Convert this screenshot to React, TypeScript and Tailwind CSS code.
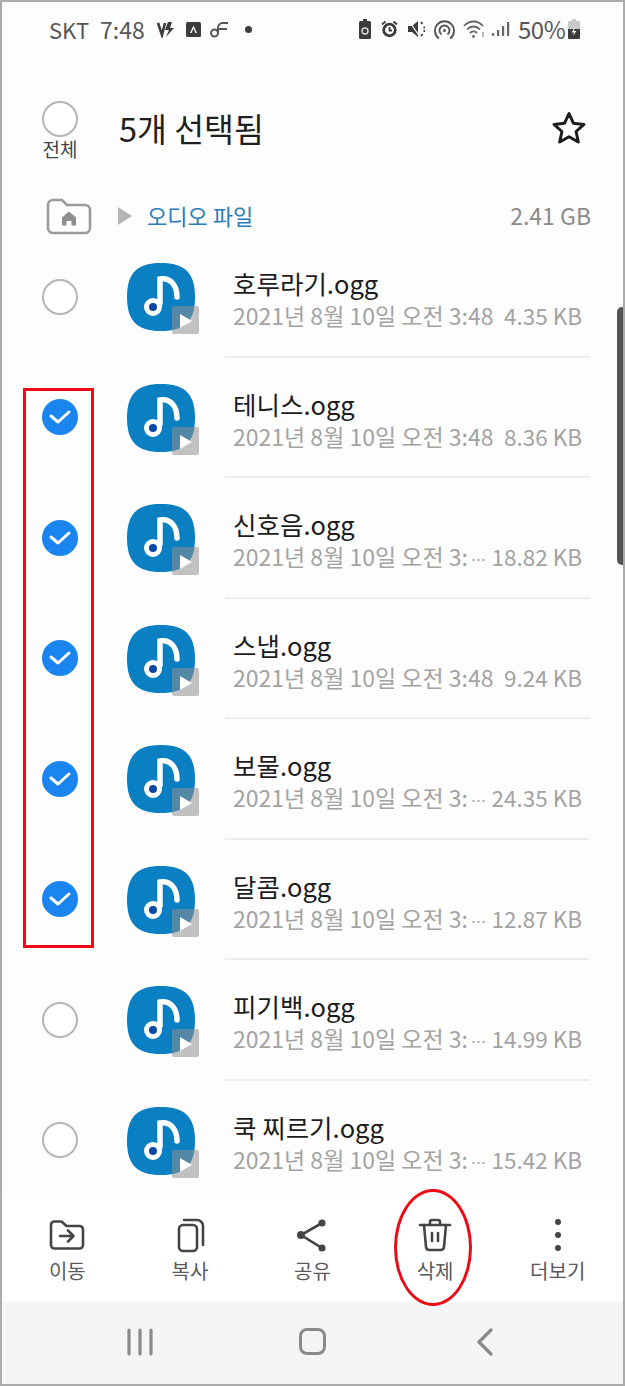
const files = [
  { name: '호루라기.ogg', date: '2021년 8월 10일 오전 3:48', size: '4.35 KB', checked: false, cut: false },
  { name: '테니스.ogg', date: '2021년 8월 10일 오전 3:48', size: '8.36 KB', checked: true, cut: false },
  { name: '신호음.ogg', date: '2021년 8월 10일 오전 3:', size: '18.82 KB', checked: true, cut: true },
  { name: '스냅.ogg', date: '2021년 8월 10일 오전 3:48', size: '9.24 KB', checked: true, cut: false },
  { name: '보물.ogg', date: '2021년 8월 10일 오전 3:', size: '24.35 KB', checked: true, cut: true },
  { name: '달콤.ogg', date: '2021년 8월 10일 오전 3:', size: '12.87 KB', checked: true, cut: true },
  { name: '피기백.ogg', date: '2021년 8월 10일 오전 3:', size: '14.99 KB', checked: false, cut: true },
  { name: '쿡 찌르기.ogg', date: '2021년 8월 10일 오전 3:', size: '15.42 KB', checked: false, cut: true },
];

function EmptyCircle() {
  return <div className="h-9 w-9 rounded-full border-2 border-[#b5b5b5] bg-white" />;
}

function CheckCircle() {
  return (
    <div className="flex h-9 w-9 items-center justify-center rounded-full bg-[#1a85ee]">
      <svg width="24" height="18" viewBox="0 0 24 18" fill="none">
        <path d="M3 8L10 14L21 4" stroke="#fff" strokeWidth="3" strokeLinecap="round" strokeLinejoin="round" />
      </svg>
    </div>
  );
}

function MusicIcon() {
  return (
    <svg width="74" height="74" viewBox="0 0 74 74" className="shrink-0">
      <path d="M34 0C58 0 68 10 68 34C68 58 58 68 34 68C10 68 0 58 0 34C0 10 10 0 34 0Z" fill="#0a7fc1" />
      <path d="M33 40V16C43 14 50 22 50 34" fill="none" stroke="#fff" strokeWidth="5.5" strokeLinecap="round" />
      <circle cx="26" cy="44" r="6.5" fill="#0b47a6" stroke="#fff" strokeWidth="5" />
      <rect x="45" y="43" width="27" height="28" rx="2" fill="#8f8f8f" fillOpacity="0.55" />
      <path d="M53 51L65 58L53 65Z" fill="#fff" />
    </svg>
  );
}

function FileRow({ file, last }: { file: (typeof files)[number]; last: boolean }) {
  return (
    <div className="flex h-[120.5px] shrink-0 items-start">
      <div className="flex h-[120px] w-[116px] shrink-0 items-center justify-center pb-[1px]">
        {file.checked ? <CheckCircle /> : <EmptyCircle />}
      </div>
      <div className="mt-[26px] w-[107px] shrink-0 pl-[9px]">
        <MusicIcon />
      </div>
      <div className={`h-[120.5px] w-[365px] px-[8px] pt-[28px] ${last ? '' : 'border-b-2 border-[#eeeeee]'}`}>
        <div className="text-[25.5px] leading-[36px] text-[#1c1c1c]">{file.name}</div>
        <div className="mt-[-1px] flex items-baseline justify-between text-[#a3a3a3]">
          <span className="text-[23px] leading-[30px]">
            {file.date}
            {file.cut && <span className="ml-[3px] text-[15px]">⋯</span>}
          </span>
          <span className="text-[22.5px] leading-[30px]">{file.size}</span>
        </div>
      </div>
    </div>
  );
}

function StatusBar() {
  return (
    <div className="flex h-[54px] shrink-0 items-center justify-between pl-[47px] pr-[43px] text-[#575757]">
      <div className="flex items-center">
        <span className="w-[51px] text-[22px]">SKT</span>
        <span className="w-[57px] text-[23px]">7:48</span>
        <svg width="18" height="18" viewBox="0 0 18 18" fill="none" className="mr-[11px]">
          <path d="M1 3l4 12 3-12" stroke="#3c3c3c" strokeWidth="2.6" />
          <path d="M11 2L8 10h4l-3 7 8-9h-4l2-6z" fill="#3c3c3c" />
        </svg>
        <svg width="15" height="15" viewBox="0 0 15 15" className="mr-[9px]">
          <rect width="15" height="15" rx="1.5" fill="#3c3c3c" />
          <path d="M7.5 3.5L11 11H9.5L7.5 6.5 5.5 11H4z" fill="#fff" />
        </svg>
        <svg width="19" height="17" viewBox="0 0 19 17" fill="none" stroke="#555" strokeWidth="2" className="mr-[16px]">
          <circle cx="4.5" cy="12" r="3.5" />
          <path d="M8 12V7c0-3 2-5 4.5-5H18M8 8h9" />
        </svg>
        <div className="h-[7px] w-[7px] rounded-full bg-[#3c3c3c]" />
      </div>
      <div className="flex items-center">
        <svg width="12" height="20" viewBox="0 0 12 20" className="mr-[10px]">
          <path d="M4 0h4v2h2.500A1.500 1.500 0 0 1 12 3.500V18.500A1.500 1.500 0 0 1 10.500 20H1.500A1.500 1.500 0 0 1 0 18.500V3.500A1.500 1.500 0 0 1 1.500 2H4z" fill="#3c3c3c" />
          <circle cx="6" cy="12" r="3" fill="none" stroke="#ddd" strokeWidth="1.4" />
        </svg>
        <svg width="17" height="18" viewBox="0 0 17 18" fill="none" className="mr-[10px]">
          <circle cx="8.5" cy="10" r="5.8" stroke="#3c3c3c" strokeWidth="2.8" />
          <path d="M1 4.5L4.500 1.500M16 4.500L12.500 1.500M8.500 7v3.500h2.500" stroke="#3c3c3c" strokeWidth="1.8" />
        </svg>
        <svg width="17" height="18" viewBox="0 0 17 18" fill="none" className="mr-[9px]">
          <path d="M0 6h4l6-5v16l-6-5H0z" fill="#3c3c3c" />
          <path d="M13 2l1.500 2M15.500 7.500H17M15.500 11H17M13 16l1.500-2" stroke="#3c3c3c" strokeWidth="1.8" />
          <path d="M1 1l11 16" stroke="#fff" strokeWidth="1.2" />
        </svg>
        <svg width="21" height="21" viewBox="0 0 21 21" fill="none" stroke="#555" strokeWidth="1.9" className="mr-[8px]">
          <path d="M5 19.500a9.500 9.500 0 1 1 11 0" />
          <path d="M7.500 15.500a5 5 0 1 1 6 0" />
          <circle cx="10.5" cy="11.5" r="1.5" fill="#555" stroke="none" />
        </svg>
        <svg width="23" height="20" viewBox="0 0 23 20" fill="none" stroke="#666" strokeWidth="1.8" className="mr-[6px]">
          <path d="M1 7c5.500-6 13.500-6 19 0M4 10.500c3.800-4 9.200-4 13 0M7 14c2-2 5-2 7 0" />
          <circle cx="10.5" cy="17.5" r="1.4" fill="#666" stroke="none" />
          <path d="M20 13v5" stroke="#999" strokeWidth="1.3" />
        </svg>
        <svg width="18" height="16" viewBox="0 0 18 16" className="mr-[8px]">
          <rect x="0" y="12" width="2.2" height="3" fill="#777" />
          <rect x="5" y="9" width="2.2" height="6" fill="#666" />
          <rect x="10" y="5" width="2.2" height="10" fill="#666" />
          <rect x="15" y="1" width="2.2" height="14" fill="#666" />
        </svg>
        <span className="w-[50px] text-[24px] tracking-[-0.5px]">50%</span>
        <svg width="12" height="20" viewBox="0 0 12 20">
          <path d="M4 0h4v2h2.500A1.500 1.500 0 0 1 12 3.500V18.500A1.500 1.500 0 0 1 10.500 20H1.500A1.500 1.500 0 0 1 0 18.500V3.500A1.500 1.500 0 0 1 1.500 2H4z" fill="#c8c8c8" />
          <path d="M0 10h12v8.500a1.500 1.500 0 0 1-1.500 1.500H1.500A1.500 1.500 0 0 1 0 18.500z" fill="#3c3c3c" />
          <path d="M7 8L3.500 13.500H6L5 17l3.500-5H6z" fill="#eee" />
        </svg>
      </div>
    </div>
  );
}

function Header() {
  return (
    <div className="flex h-[118px] shrink-0 items-start justify-between pr-[36px]">
      <div className="flex items-start">
        <div className="flex w-[117px] flex-col items-center pr-[1px] pt-[45px]">
          <EmptyCircle />
          <span className="mt-[-1px] text-[19px] leading-[26px] text-[#444]">전체</span>
        </div>
        <div className="pt-[48px] text-[32.5px] leading-[48px] text-[#1f1f1f]">5개 선택됨</div>
      </div>
      <svg width="36" height="36" viewBox="0 0 36 36" fill="none" className="mt-[54px]">
        <path d="M18 3.500L22.400 13.200L33 14.400L25.100 21.500L27.300 32L18 26.700L8.700 32L10.900 21.500L3 14.400L13.600 13.200Z" stroke="#1c1c1c" strokeWidth="3" strokeLinejoin="round" />
      </svg>
    </div>
  );
}

function Breadcrumb() {
  return (
    <div className="flex h-[63px] shrink-0 items-start pl-[44px] pr-[32px]">
      <svg width="46" height="38" viewBox="0 0 46 38" fill="none" className="mt-[23px]">
        <path d="M2 8a5 5 0 0 1 5-5h9l5 5h18a5 5 0 0 1 5 5v18a5 5 0 0 1-5 5H7a5 5 0 0 1-5-5z" stroke="#9c9c9c" strokeWidth="2.6" />
        <path d="M23 14.500l7 6v8h-4.500v-4.500h-5V28.500H16v-8z" fill="#8f8f8f" />
      </svg>
      <svg width="16" height="18" viewBox="0 0 16 18" className="ml-[25px] mt-[33px]">
        <path d="M1 0L15 9L1 18Z" fill="#b4b4b4" />
      </svg>
      <span className="ml-[14px] mt-[25px] text-[22px] leading-[33px] text-[#2b7cb8]">오디오 파일</span>
      <span className="ml-auto mt-[25px] text-[23px] leading-[33px] text-[#8b8b8b]">2.41 GB</span>
    </div>
  );
}

function ToolIcon({ kind }: { kind: string }) {
  if (kind === 'move') {
    return (
      <svg width="36" height="36" viewBox="0 0 36 36" fill="none" stroke="#454545" strokeWidth="2.6" strokeLinecap="round" strokeLinejoin="round">
        <path d="M2 8a3.500 3.500 0 0 1 3.500-3.500h7l5 4.500h13A3.500 3.500 0 0 1 34 12.500V28a3.500 3.500 0 0 1-3.500 3.500h-25A3.500 3.500 0 0 1 2 28z" />
        <path d="M11 19h13M19 13.500l5.500 5.500-5.500 5.500" />
      </svg>
    );
  }
  if (kind === 'copy') {
    return (
      <svg width="36" height="36" viewBox="0 0 36 36" fill="none" stroke="#454545" strokeWidth="2.6" strokeLinecap="round">
        <rect x="7" y="8" width="18" height="26" rx="4" />
        <path d="M12 3h13a6 6 0 0 1 6 6v19" />
      </svg>
    );
  }
  if (kind === 'share') {
    return (
      <svg width="36" height="36" viewBox="0 0 36 36" fill="#454545" stroke="#454545" strokeWidth="2.6">
        <path d="M28 6L7 18L28 31" fill="none" />
        <circle cx="28" cy="6" r="3.6" stroke="none" />
        <circle cx="7" cy="18" r="4" stroke="none" />
        <circle cx="28" cy="31" r="3.6" stroke="none" />
      </svg>
    );
  }
  if (kind === 'trash') {
    return (
      <svg width="36" height="36" viewBox="0 0 36 36" fill="none" stroke="#454545" strokeWidth="2.6" strokeLinecap="round" strokeLinejoin="round">
        <path d="M3 8h30M13 8V5a2 2 0 0 1 2-2h6a2 2 0 0 1 2 2v3" />
        <path d="M7 8l2 22a3.500 3.500 0 0 0 3.500 3h11a3.500 3.500 0 0 0 3.500-3l2-22" />
        <path d="M15 16v8M21 16v8" />
      </svg>
    );
  }
  return (
    <svg width="36" height="36" viewBox="0 0 36 36" fill="#454545">
      <circle cx="18" cy="5" r="3" />
      <circle cx="18" cy="18" r="3" />
      <circle cx="18" cy="31" r="3" />
    </svg>
  );
}

const tools = [
  { kind: 'move', label: '이동' },
  { kind: 'copy', label: '복사' },
  { kind: 'share', label: '공유' },
  { kind: 'trash', label: '삭제' },
  { kind: 'more', label: '더보기' },
];

function Toolbar() {
  return (
    <div className="grid h-[107px] shrink-0 grid-cols-5 bg-white px-[4px] pt-[22px]">
      {tools.map((tool) => (
        <div key={tool.kind} className="flex flex-col items-center">
          <ToolIcon kind={tool.kind} />
          <span className="mt-[3px] text-[20px] leading-[30px] text-[#5a5a5a]">{tool.label}</span>
        </div>
      ))}
    </div>
  );
}

function NavBar() {
  return (
    <div className="grid h-[82px] shrink-0 grid-cols-3 items-center bg-[#f5f5f5] px-[52px] pb-[3px]">
      <div className="flex justify-center">
        <svg width="28" height="28" viewBox="0 0 28 28" stroke="#8a8a8a" strokeWidth="3.2" strokeLinecap="round">
          <path d="M3 2v24M14 2v24M25 2v24" />
        </svg>
      </div>
      <div className="flex justify-center">
        <div className="h-[27px] w-[27px] rounded-[8px] border-[3px] border-[#8a8a8a]" />
      </div>
      <div className="flex justify-center">
        <svg width="18" height="28" viewBox="0 0 18 28" fill="none" stroke="#8a8a8a" strokeWidth="3.2" strokeLinecap="round" strokeLinejoin="round">
          <path d="M15 2L3 14l12 12" />
        </svg>
      </div>
    </div>
  );
}

export default function App() {
  return (
    <div
      className="relative flex h-[1386px] w-[625px] flex-col overflow-hidden border-2 border-[#ababab] bg-[#fdfdfd]"
      style={{ fontFamily: '"Noto Sans CJK KR", "Noto Sans", sans-serif' }}
    >
      <StatusBar />
      <Header />
      <Breadcrumb />
      <div className="flex min-h-0 flex-1 flex-col overflow-hidden">
        {files.map((file, index) => (
          <FileRow key={file.name} file={file} last={index === files.length - 1} />
        ))}
      </div>
      <Toolbar />
      <NavBar />

      {/* scroll thumb + the red annotations sit on top of the page */}
      <div className="absolute right-0 top-[305px] h-[258px] w-[6px] rounded-l-[5px] bg-[#555]" />
      <div className="absolute left-[21px] top-[386px] h-[560px] w-[71px] border-[3px] border-[#ec0a14]" />
      <div className="absolute left-[392px] top-[1187px] h-[117px] w-[78px] rounded-[50%] border-[3px] border-[#ec0a14]" />
    </div>
  );
}
